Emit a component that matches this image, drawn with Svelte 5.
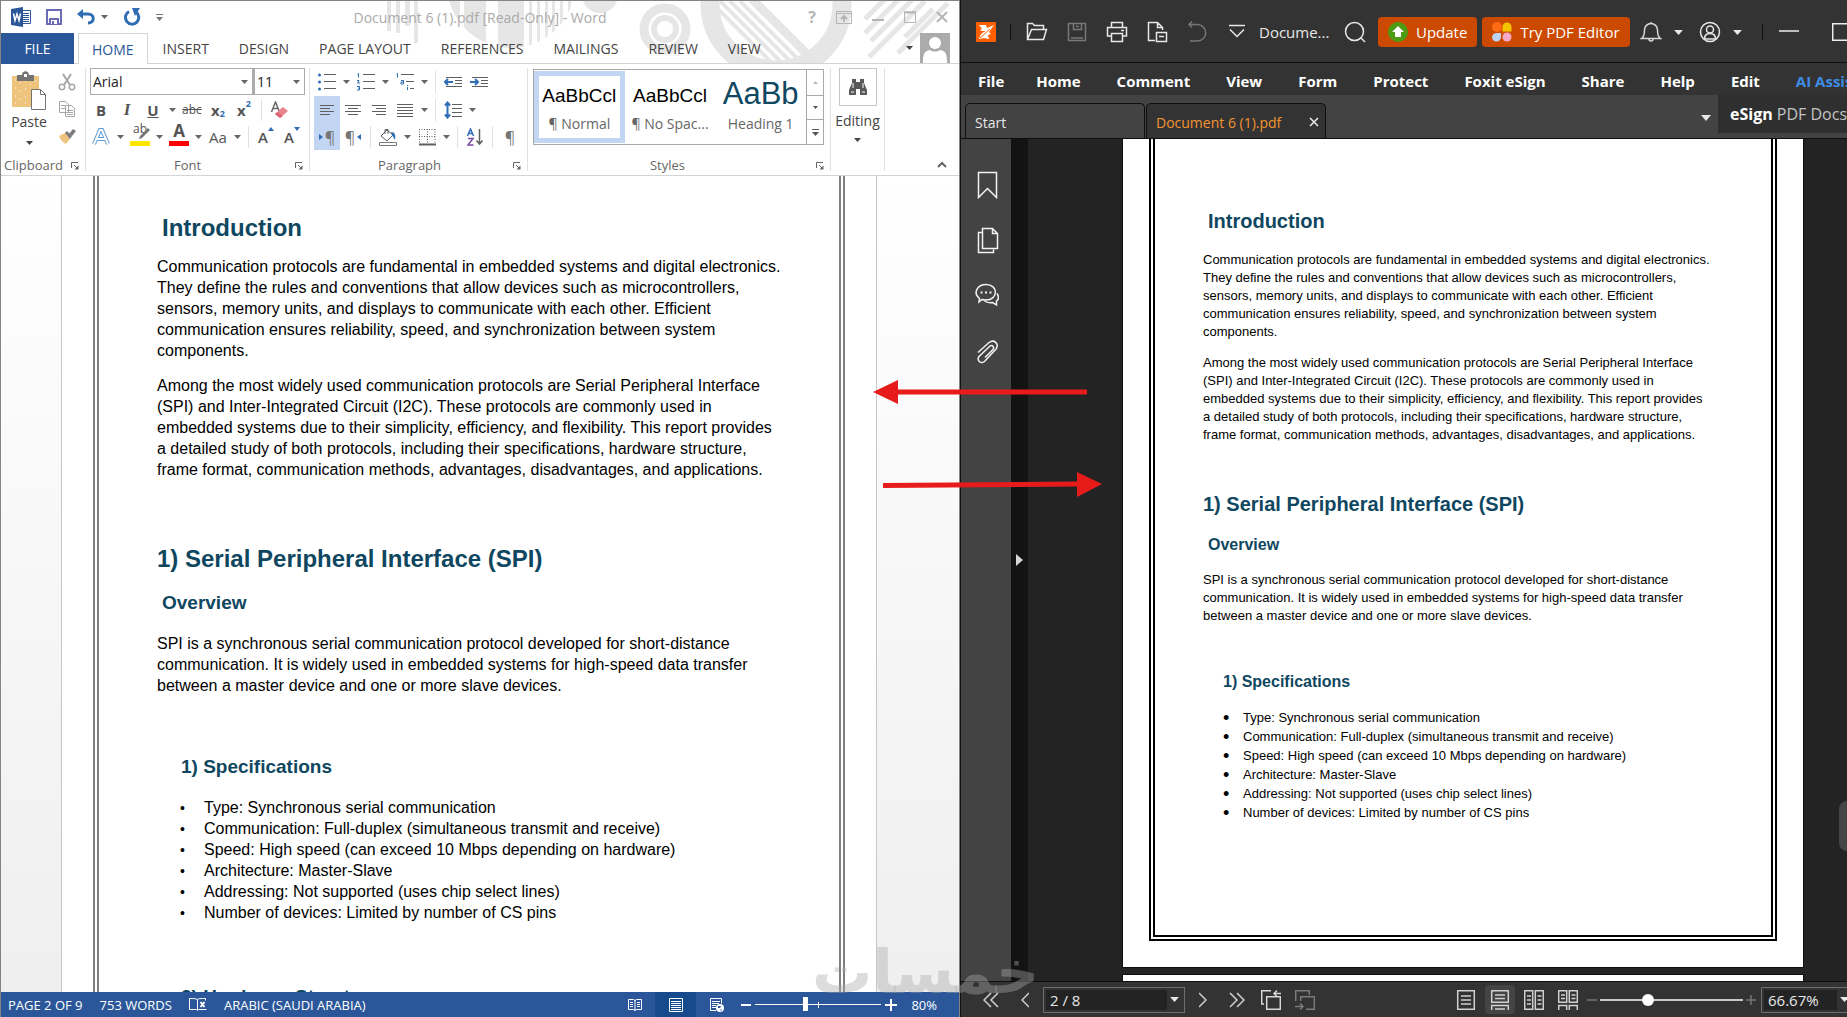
<script>
  let font = $state("Arial");
  let fontSize = $state("11");
  let wordZoom = $state(39);
  let pdfPage = $state("2 / 8");
  let pdfZoom = $state("66.67%");
  let pdfSlider = $state(32);

  const wordTabs = [
    "INSERT",
    "DESIGN",
    "PAGE LAYOUT",
    "REFERENCES",
    "MAILINGS",
    "REVIEW",
    "VIEW",
  ];

  const pdfMenu = [
    "Home",
    "Comment",
    "View",
    "Form",
    "Protect",
    "Foxit eSign",
    "Share",
    "Help",
    "Edit",
  ];

  const intro = [
    "Communication protocols are fundamental in embedded systems and digital electronics.",
    "They define the rules and conventions that allow devices such as microcontrollers,",
    "sensors, memory units, and displays to communicate with each other. Efficient",
    "communication ensures reliability, speed, and synchronization between system",
    "components.",
  ];

  const among = [
    "Among the most widely used communication protocols are Serial Peripheral Interface",
    "(SPI) and Inter-Integrated Circuit (I2C). These protocols are commonly used in",
    "embedded systems due to their simplicity, efficiency, and flexibility. This report provides",
    "a detailed study of both protocols, including their specifications, hardware structure,",
    "frame format, communication methods, advantages, disadvantages, and applications.",
  ];

  const overview = [
    "SPI is a synchronous serial communication protocol developed for short-distance",
    "communication. It is widely used in embedded systems for high-speed data transfer",
    "between a master device and one or more slave devices.",
  ];

  const specs = [
    "Type: Synchronous serial communication",
    "Communication: Full-duplex (simultaneous transmit and receive)",
    "Speed: High speed (can exceed 10 Mbps depending on hardware)",
    "Architecture: Master-Slave",
    "Addressing: Not supported (uses chip select lines)",
    "Number of devices: Limited by number of CS pins",
  ];

  const lines = (ys, x1 = 2, x2 = 16) =>
    ys.map((y) => `<path d="M${x1} ${y}.5H${x2}" stroke="#5f5f5f"/>`).join("");

  // 18x18 ribbon glyphs
  const ribbon = {
    bullets: `<g fill="#2f6db5"><circle cx="1.5" cy="2" r="1.5"/><circle cx="1.5" cy="9" r="1.5"/><circle cx="1.5" cy="16" r="1.5"/></g>${lines([1, 8, 15], 6, 18)}`,
    numbers: `<g fill="none" stroke="#2f6db5"><path d="M.5 1l1-.5v4M0 7.500h2l-1.500 2.500H3M0 13.500h2.500v3.500H0M1 15.200h1.500"/></g>${lines([1, 8, 15], 6, 18)}`,
    multi: `<g fill="none" stroke="#2f6db5"><path d="M.5 1l1-.5v4M5 7.500h2.500v3.500H5v-2h2.500M11.500 14v3M11.500 12v1"/></g>${lines([1], 5, 18)}${lines([8], 10, 18)}${lines([15], 14, 18)}`,
    outdent: `<path d="M1 9h8M4 6L1 9l3 3" fill="none" stroke="#2f6db5" stroke-width="2"/>${lines([4, 13], 2, 18)}${lines([7, 10], 11, 18)}`,
    indent: `<path d="M0 9h8M5 6l3 3-3 3" fill="none" stroke="#2f6db5" stroke-width="2"/>${lines([4, 13], 2, 18)}${lines([7, 10], 11, 18)}`,
    left: lines([4, 10], 2, 16) + lines([7, 13], 2, 12),
    center: lines([4, 10], 1, 17) + lines([7, 13], 4, 14),
    right: lines([4, 10], 2, 16) + lines([7, 13], 6, 16),
    justify: lines([3, 6, 9, 12, 15], 1, 17),
    spacing: `<path d="M3.500 2v14M1 4.500L3.500 1.500 6 4.500M1 13.500l2.500 3 2.500-3" fill="none" stroke="#2f6db5" stroke-width="2"/>${lines([3, 7, 11, 15], 8, 18)}`,
    bucket: `<path d="M8 2l6 5-6 6-6-5z" fill="#fff" stroke="#5f5f5f"/><path d="M6 6V1.500h3V6" fill="none" stroke="#5f5f5f"/><path d="M12 4c4 0 5 3 4 8-1-2-2-3-3-5z" fill="#2f6db5"/><path d="M.5 14.500h17v3h-17z" fill="#fff" stroke="#7a7a7a"/>`,
    borders: `<path d="M1.500 1v15M9.500 1v15M17 1v15M1 1.500h16M1 8.500h16" stroke="#5f5f5f" stroke-dasharray="1 1.500"/><path d="M1 16.500h17" stroke="#5f5f5f" stroke-width="2"/>`,
    sort: `<path d="M13.500 1v15M10.500 12.500l3 3.500 3-3.500" fill="none" stroke="#5f5f5f" stroke-width="1.500"/><path d="M1.500 8l3-7 3 7M2.700 5.500h3.800" fill="none" stroke="#2f6db5" stroke-width="1.500"/><path d="M2 10.500h5L2 17h5.500" fill="none" stroke="#7d4b9f" stroke-width="1.500"/>`,
    eraser: `<path d="M1.500 11L5.500 1l4 10M3 7.500h5" fill="none" stroke="#6a6a6a" stroke-width="1.500"/><path d="M5 13l8-7 5 4-8 7z" fill="#e8828c"/><path d="M5 13l2.500-2 5 4-2.500 2z" fill="#d96672"/>`,
  };

  const cut = `<path d="M5 1l7 11M13 1L6 12" stroke="#a6a6a6" stroke-width="2" fill="none"/><circle cx="4" cy="14" r="2.700" fill="none" stroke="#a6a6a6" stroke-width="1.500"/><circle cx="14" cy="14" r="2.700" fill="none" stroke="#a6a6a6" stroke-width="1.500"/>`;
  const copy = `<path d="M1.500 1.500h6l3 3v8h-9zM7.500 5.500h6l3 3v8h-9z" fill="#fff" stroke="#a6a6a6"/><path d="M3 5.500h4M3 8.500h4M9 10.500h6M9 12.500h6M9 14.500h6" stroke="#a6a6a6"/>`;
  const brush = `<path d="M1 9l6-3 5 6-4 5c-2-1-5-3-7-8z" fill="#eec37c"/><path d="M7 6l2-2 5 5-2 3z" fill="#7a7a7a"/><path d="M11 7l4-5 3 2-4 5z" fill="#7a7a7a"/>`;

  // 22x22 outline icons of the reader
  const reader = {
    open: `<path d="M1.500 18.500v-16h5l2 2h9v4M1.500 18.500l4-10h15l-3 10z"/>`,
    save: `<path stroke="#777" d="M2.500 2.500h17v17h-17zM7.500 2.500v6h8v-6M10 5.500h3M5 17h12"/>`,
    print: `<path d="M5.500 6V1.500h11V6M5.500 15h-4V6.500h19V15h-4M5.500 12.500h11v8h-11zM15 9.500h3"/>`,
    pages: `<path d="M9 19.500H2.500v-18h9l5 5V9M11.500 1.500v5h5M10.500 11.500h10v9h-10zM13 15.500h5"/>`,
    undo: `<path stroke="#777" d="M3 3.500h8.500a8 8 0 0 1 0 16.500H4M6 .5l-3 3 3 3"/>`,
    more: `<path d="M3 4.500h16M4 8.500l7 7 7-7"/>`,
    search: `<circle cx="10.500" cy="10.500" r="9"/><path d="M17 17l4 4"/>`,
    bell: `<path d="M1.500 17.500c3-2 3-5 3-8.500a6.500 6.500 0 0 1 13 0c0 3.500 0 6.500 3 8.500zM9 18a2 2 0 0 0 4 0M11 1v2"/>`,
    user: `<circle cx="11" cy="11" r="9.500"/><circle cx="11" cy="8.500" r="3.500"/><path d="M5.500 18c0-4 2-5.500 5.500-5.500s5.500 1.500 5.500 5.500z"/>`,
  };

  // 24x28 outline icons of the side panel
  const side = [
    ["Bookmarks", `<path d="M3.500 1.500h18v25l-9-9-9 9z"/>`],
    [
      "Pages",
      `<path d="M7.500 1.500h10l5 5v15h-15zM17.500 1.500v5h5M7.500 5.500h-4v20h15v-3"/>`,
    ],
    [
      "Comments",
      `<path d="M4.500 15.500c-7-5.500-2-14 6.500-14 12.500 0 12.500 15.500 0 15.500-2 0-3 0-4-.5L4 19z"/><path d="M22 10.500c2.500 4 1 6.500-.5 7.500v4l-4-2.500c-4 .5-6 0-8-1.500"/><path d="M5.500 9.500h2M10 9.500h2M14.500 9.500h2" stroke-width="2"/>`,
    ],
    [
      "Attachments",
      `<path d="M3 13.500L14 3.500c5-3.500 10.500 1 7 6.500L9.500 22.500c-4 3-8-1.500-5.500-5L15 7c2.500-1.500 4.500 1 3 3.500L10 18.500"/>`,
    ],
  ];
</script>

{#snippet caret()}
  <svg class="caret" width="7" height="4" viewBox="0 0 7 4" aria-hidden="true">
    <path d="M0 0h7L3.500 4z" fill="currentColor" />
  </svg>
{/snippet}

{#snippet tool(name)}
  <button class="tool" aria-label={name}>
    <svg width="18" height="18" viewBox="0 0 18 18">{@html ribbon[name]}</svg>
  </button>
{/snippet}

{#snippet drop(name)}
  <button class="drop" aria-label={name}>{@render caret()}</button>
{/snippet}

{#snippet launcher(name)}
  <button class="launcher" aria-label={name}>
    <svg width="8" height="8" viewBox="0 0 8 8">
      <path d="M.5 6V.5H7M3 3l4 4" fill="none" stroke="#666" />
      <path d="M7.500 3.500v4h-4z" fill="#666" />
    </svg>
  </button>
{/snippet}

{#snippet text(rows)}
  <p>
    {#each rows as row}
      <span class="line">{row}</span>
    {/each}
  </p>
{/snippet}

{#snippet report()}
  <h2 class="nudge">Introduction</h2>
  {@render text(intro)}
  {@render text(among)}
  <h2 class="chapter">1) Serial Peripheral Interface (SPI)</h2>
  <h3 class="nudge">Overview</h3>
  {@render text(overview)}
  <h3 class="sub">1) Specifications</h3>
  <ul>
    {#each specs as spec}
      <li>{spec}</li>
    {/each}
  </ul>
{/snippet}

<div class="desktop">
  <section class="word" aria-label="Word">
    <header class="word__top">
      <svg class="pattern" width="575" height="62" viewBox="375 0 575 62" aria-hidden="true">
        <defs>
          <clipPath id="disc"><circle cx="511" cy="-17" r="64" /></clipPath>
          <clipPath id="ring"><circle cx="776" cy="3" r="58" /></clipPath>
        </defs>
        <g fill="#e6e6e6">
          <path d="M387 0h4v30h-4zM396 0h4v32h-4zM405 0h5v25h-5zM414 0h4v42h-4z" />
          <path
            clip-path="url(#disc)"
            d="M447 0h13v50h-13zM464 0h22v50h-22zM498 0h26v50h-26zM529 0h3v50h-3zM537 0h3v50h-3zM545 0h3v50h-3zM552 0h3v50h-3zM560 0h3v50h-3zM568 0h3v50h-3z"
          />
          <circle cx="600" cy="-6" r="18" />
        </g>
        <g fill="none" stroke="#e6e6e6">
          <circle cx="665" cy="28" r="21" stroke-width="9" />
          <circle cx="665" cy="28" r="11" stroke-width="6" />
          <circle cx="776" cy="3" r="66" stroke-width="19" />
          <path
            clip-path="url(#ring)"
            stroke-width="4"
            d="M710 0l70 70M720 0l70 70M730 0l70 70M740 0l70 70"
          />
          <path clip-path="url(#ring)" stroke-width="9" d="M752 -2l60 60" />
          <path
            stroke-width="5"
            d="M887 -4l-22 22M900 -3l-35 35M913 -2l-42 42M925 0l-56 56M933 8l-28 28M948 2l-50 50"
          />
        </g>
      </svg>

      <div class="titlebar">
        <div class="quick">
          <svg width="20" height="20" viewBox="0 0 20 20" aria-hidden="true">
            <path d="M10.500 3.500h9v13h-9z" fill="#fff" stroke="#2b579a" />
            <path d="M12 6.500h6M12 8.500h6M12 10.500h6M12 12.500h6M12 14.500h6" stroke="#2b579a" />
            <path d="M0 2l12-2v20L0 18z" fill="#2b579a" />
            <path d="M2.500 6.500l1.500 7 2-6.500 2 6.500 1.500-7" fill="none" stroke="#fff" stroke-width="1.500" />
          </svg>
          <button aria-label="Save">
            <svg width="16" height="16" viewBox="0 0 16 16">
              <path d="M1 1h14v14H1z" fill="#fff" stroke="#6b6bb3" stroke-width="2" />
              <path d="M3 9h10v7H3z" fill="#6b6bb3" />
              <path d="M5 11h6v4H5z" fill="#fff" />
              <path d="M6 12h2v3H6z" fill="#6b6bb3" />
            </svg>
          </button>
          <button class="undo" aria-label="Undo">
            <svg width="18" height="16" viewBox="0 0 18 16">
              <path d="M3 5h8c7 0 7 9 0 9" fill="none" stroke="#2f6db5" stroke-width="3" />
              <path d="M0 5l6-5v10z" fill="#2f6db5" />
            </svg>
            {@render caret()}
          </button>
          <button aria-label="Redo">
            <svg width="18" height="18" viewBox="0 0 18 18">
              <path d="M6 3.500A6.700 6.700 0 1 0 13 4" fill="none" stroke="#2f6db5" stroke-width="3" />
              <path d="M9 0h8l-5 8z" fill="#2f6db5" />
            </svg>
          </button>
          <button class="customise" aria-label="Customize Quick Access Toolbar">
            <svg width="7" height="7" viewBox="0 0 7 7">
              <path d="M0 .5h7" stroke="#777" /><path d="M0 3h7L3.500 7z" fill="#777" />
            </svg>
          </button>
        </div>
        <h1>Document 6 (1).pdf [Read-Only] - Word</h1>
        <div class="window">
          <button class="help" aria-label="Help">?</button>
          <button aria-label="Ribbon Display Options">
            <svg width="16" height="13" viewBox="0 0 16 13">
              <path d="M.5 .5h15v12H.5zM.5 2.500h15" fill="none" stroke="#b5b5b5" />
              <path d="M8 11V5M5 8l3-3 3 3" fill="none" stroke="#b5b5b5" stroke-width="2" />
            </svg>
          </button>
          <button aria-label="Minimize">
            <svg width="12" height="12" viewBox="0 0 12 12"><path d="M0 9h12" stroke="#b5b5b5" stroke-width="2" /></svg>
          </button>
          <button aria-label="Maximize">
            <svg width="12" height="12" viewBox="0 0 12 12">
              <path d="M.5 1h11v10.500H.5z" fill="none" stroke="#b5b5b5" /><path d="M0 1.500h12" stroke="#b5b5b5" stroke-width="2" />
            </svg>
          </button>
          <button aria-label="Close">
            <svg width="12" height="12" viewBox="0 0 12 12"><path d="M1 1l10 10M11 1L1 11" stroke="#b5b5b5" stroke-width="2" /></svg>
          </button>
        </div>
      </div>

      <nav class="tabs" aria-label="Ribbon tabs">
        <button class="file">FILE</button>
        <button class="active">HOME</button>
        {#each wordTabs as tab}
          <button>{tab}</button>
        {/each}
        <div class="account">
          {@render caret()}
          <svg width="30" height="30" viewBox="0 0 30 30" aria-hidden="true">
            <path d="M0 0h30v30H0z" fill="#ababab" />
            <circle cx="15" cy="10" r="6" fill="#fff" />
            <path d="M3 30c0-9 1-12 7-13 3 2 7 2 10 0 6 1 7 4 7 13z" fill="#fff" />
          </svg>
        </div>
      </nav>
    </header>

    <div class="ribbon">
      <div class="group clipboard">
        <div class="group__body">
          <button class="paste">
            <svg width="36" height="40" viewBox="0 0 36 40" aria-hidden="true">
              <path d="M1 5h27v31H1z" fill="#eec37c" />
              <path d="M4 9h1M9 12h1M14 10h1M19 13h1M4 17h1M9 20h1M14 18h1M4 25h1M9 28h1M14 26h1M4 32h1M14 32h1M24 10h1" stroke="#fff" />
              <path d="M6 4h5c0-5 7-5 7 0h5v6H6z" fill="#737373" />
              <path d="M13 3h3v3h-3z" fill="#fff" />
              <path d="M20.500 18.500h9l5 5v15h-14z" fill="#fff" stroke="#737373" />
              <path d="M29.500 18.500v5h5" fill="none" stroke="#737373" />
            </svg>
            <span>Paste</span>
            {@render caret()}
          </button>
          <div class="stack">
            <button class="tool" aria-label="Cut"><svg width="18" height="18" viewBox="0 0 18 18">{@html cut}</svg></button>
            <button class="tool" aria-label="Copy"><svg width="18" height="18" viewBox="0 0 18 18">{@html copy}</svg></button>
            <button class="tool" aria-label="Format Painter"><svg width="18" height="18" viewBox="0 0 18 18">{@html brush}</svg></button>
          </div>
        </div>
        <footer>Clipboard {@render launcher("Clipboard settings")}</footer>
      </div>

      <div class="group font">
        <div class="row combos">
          <label class="combo">
            <select bind:value={font} aria-label="Font"><option>Arial</option></select>
            {@render caret()}
          </label>
          <label class="combo combo--size">
            <select bind:value={fontSize} aria-label="Font size"><option>11</option></select>
            {@render caret()}
          </label>
        </div>
        <div class="row">
          <button class="tool"><b>B</b></button>
          <button class="tool serif"><i>I</i></button>
          <button class="tool"><u>U</u></button>
          {@render drop("Underline style")}
          <button class="tool strike"><s>abc</s></button>
          <button class="tool"><b>x</b><sub>2</sub></button>
          <button class="tool"><b>x</b><sup>2</sup></button>
          <span class="sep"></span>
          {@render tool("eraser")}
        </div>
        <div class="row">
          <button class="tool" aria-label="Text Effects">
            <svg width="18" height="18" viewBox="0 0 18 18">
              <path d="M2 16L8 2h2l6 14M5 11h8" fill="none" stroke="#5b9bd5" stroke-width="4" />
              <path d="M2 16L8 2h2l6 14M5 11h8" fill="none" stroke="#fff" stroke-width="2" />
            </svg>
          </button>
          {@render drop("Text effects style")}
          <button class="tool mark mark--yellow" aria-label="Highlight">
            <span>ab</span>
            <svg width="12" height="12" viewBox="0 0 12 12"><path d="M1 11l1-3 8-8 2 2-8 8z" fill="#777" /></svg>
          </button>
          {@render drop("Highlight colour")}
          <button class="tool mark mark--red"><b>A</b></button>
          {@render drop("Font colour")}
          <button class="tool case">Aa</button>
          {@render drop("Change case")}
          <span class="sep"></span>
          <button class="tool grow" aria-label="Increase font size">
            <b>A</b><svg width="6" height="4" viewBox="0 0 6 4"><path d="M0 4h6L3 0z" fill="#2f6db5" /></svg>
          </button>
          <button class="tool grow" aria-label="Decrease font size">
            <b>A</b><svg width="6" height="4" viewBox="0 0 6 4"><path d="M0 0h6L3 4z" fill="#2f6db5" /></svg>
          </button>
        </div>
        <footer>Font {@render launcher("Font settings")}</footer>
      </div>

      <div class="group paragraph">
        <div class="row">
          {@render tool("bullets")}{@render drop("Bullets library")}
          {@render tool("numbers")}{@render drop("Numbering library")}
          {@render tool("multi")}{@render drop("List library")}
          <span class="sep"></span>
          {@render tool("outdent")}{@render tool("indent")}
        </div>
        <div class="row">
          <div class="on">{@render tool("left")}</div>
          {@render tool("center")}{@render tool("right")}
          {@render tool("justify")}{@render drop("Justify options")}
          <span class="sep"></span>
          {@render tool("spacing")}{@render drop("Line spacing")}
        </div>
        <div class="row">
          <button class="tool on pilcrow">
            <svg width="4" height="6" viewBox="0 0 4 6" aria-hidden="true"><path d="M0 0l4 3-4 3z" fill="#2f6db5" /></svg>¶
          </button>
          <button class="tool pilcrow">
            ¶<svg width="4" height="6" viewBox="0 0 4 6" aria-hidden="true"><path d="M4 0L0 3l4 3z" fill="#2f6db5" /></svg>
          </button>
          <span class="sep"></span>
          {@render tool("bucket")}{@render drop("Shading")}
          {@render tool("borders")}{@render drop("Borders list")}
          <span class="sep"></span>
          {@render tool("sort")}
          <span class="sep"></span>
          <button class="tool pilcrow">¶</button>
        </div>
        <footer>Paragraph {@render launcher("Paragraph settings")}</footer>
      </div>

      <div class="group styles">
        <div class="gallery">
          <button class="style style--on"><span>AaBbCcl</span><small>¶ Normal</small></button>
          <button class="style"><span>AaBbCcl</span><small>¶ No Spac...</small></button>
          <button class="style style--heading"><span>AaBb</span><small>Heading 1</small></button>
          <div class="scroll">
            <button aria-label="Previous styles">
              <svg width="5" height="3" viewBox="0 0 5 3"><path d="M0 3h5L2.500 0z" fill="#bbb" /></svg>
            </button>
            <button aria-label="Next styles">
              <svg width="5" height="3" viewBox="0 0 5 3"><path d="M0 0h5L2.500 3z" fill="#555" /></svg>
            </button>
            <button aria-label="More styles">
              <svg width="7" height="7" viewBox="0 0 7 7"><path d="M0 .5h7" stroke="#555" /><path d="M0 3h7L3.500 7z" fill="#555" /></svg>
            </button>
          </div>
        </div>
        <footer>Styles {@render launcher("Styles settings")}</footer>
      </div>

      <div class="group editing">
        <button class="find">
          <span class="find__icon">
            <svg width="18" height="16" viewBox="0 0 18 16" aria-hidden="true">
              <path d="M3 0h4v3h4V0h4v4l3 7v5h-7v-6H7v6H0v-5l3-7z" fill="#595959" />
              <path d="M4 4v5M14 4v5M2 13h3M13 13h3" stroke="#fff" />
            </svg>
          </span>
          <span>Editing</span>
          {@render caret()}
        </button>
      </div>

      <button class="collapse" aria-label="Collapse the Ribbon">
        <svg width="10" height="7" viewBox="0 0 10 7"><path d="M1 6l4-4 4 4" fill="none" stroke="#666" stroke-width="2" /></svg>
      </button>
    </div>

    <main class="word__canvas">
      <article class="word__page">
        <div class="frame">
          {@render report()}
          <h3 class="sub next">2) Hardware Structure</h3>
        </div>
      </article>
    </main>

    <footer class="word__status">
      <span>PAGE 2 OF 9</span>
      <span>753 WORDS</span>
      <button aria-label="Proofing">
        <svg width="18" height="15" viewBox="0 0 18 15">
          <path d="M8.500 13.500V2.500c-2-1-4-1-8-1v11h7l1 1 1-1h8M8.500 2.500c1-1 3-1 8-1v2" fill="none" stroke="#fff" />
          <path d="M11.500 5l4 5M15.500 5l-4 5" stroke="#fff" stroke-width="2" />
        </svg>
      </button>
      <span>ARABIC (SAUDI ARABIA)</span>
      <div class="views">
        <button aria-label="Read Mode">
          <svg width="14" height="14" viewBox="0 0 14 14">
            <path d="M.5 1.500h5l1.500 1 1.500-1h5v10h-5l-1.500 1-1.500-1h-5zM7 2v11" fill="none" stroke="#fff" />
            <path d="M2 4.500h3M2 6.500h3M2 8.500h3M9 4.500h3M9 6.500h3M9 8.500h3" stroke="#fff" />
          </svg>
        </button>
        <button class="current" aria-label="Print Layout">
          <svg width="14" height="14" viewBox="0 0 14 14">
            <path d="M.5 .5h13v13H.5zM2 3.500h10M2 5.500h10M2 7.500h10M2 9.500h10M2 11.500h10" fill="none" stroke="#fff" />
          </svg>
        </button>
        <button aria-label="Web Layout">
          <svg width="14" height="14" viewBox="0 0 14 14">
            <path d="M6 12.500H.5V.5h11v5M2 3.500h8M2 5.500h7M2 7.500h4M2 9.500h4" fill="none" stroke="#fff" />
            <circle cx="10" cy="10" r="4" fill="#fff" />
            <path d="M8 8h3l-1 2H8zM11 11l1 1-2 1z" fill="#2b579a" />
          </svg>
        </button>
      </div>
      <button aria-label="Zoom out">
        <svg width="10" height="10" viewBox="0 0 10 10"><path d="M0 5h10" stroke="#fff" stroke-width="2" /></svg>
      </button>
      <input type="range" class="word-range" bind:value={wordZoom} aria-label="Word zoom" />
      <button aria-label="Zoom in">
        <svg width="12" height="12" viewBox="0 0 12 12"><path d="M0 6h12M6 0v12" stroke="#fff" stroke-width="2" /></svg>
      </button>
      <span class="percent">80%</span>
    </footer>
  </section>

  <section class="pdf" aria-label="Foxit PDF Reader">
    <header class="pdf__title">
      <svg class="logo" width="20" height="20" viewBox="0 0 20 20" aria-hidden="true">
        <rect width="20" height="20" rx="1" fill="#ff5f00" />
        <path d="M3 3h7l1 3 7-3-5 7 2 2-3 1 1 4c-4-1-6-1-10 0 1-5 4-7 7-8-3 0-5 0-6-1l2-1z" fill="#fff" />
        <path d="M4 16l10-9" stroke="#ff5f00" />
      </svg>
      <span class="bar"></span>
      {#each ["open", "save", "print", "pages", "undo", "more"] as name}
        <button class="icon" aria-label={name}>
          <svg width="22" height="22" viewBox="0 0 22 22" fill="none" stroke="#e8e8e8" stroke-width="1.5">{@html reader[name]}</svg>
        </button>
      {/each}
      <span class="name">Docume...</span>
      <button class="icon" aria-label="Search">
        <svg width="22" height="22" viewBox="0 0 22 22" fill="none" stroke="#e8e8e8" stroke-width="1.5">{@html reader.search}</svg>
      </button>
      <button class="promo">
        <svg width="20" height="20" viewBox="0 0 20 20" aria-hidden="true">
          <circle cx="10" cy="10" r="10" fill="#4d9b13" />
          <path d="M10 4l6 6h-3v5H7v-5H4z" fill="#fff" />
        </svg>
        Update
      </button>
      <button class="promo">
        <svg width="20" height="20" viewBox="0 0 20 20" aria-hidden="true">
          <circle cx="5" cy="5" r="5" fill="#ff6a13" />
          <path d="M10.500 9.500V5a4.500 4.500 0 0 1 9 0v4.500z" fill="#f5c400" />
          <path d="M0 15a5 5 0 0 1 5-4h4v4a4.500 4.500 0 0 1-9 0z" fill="#bcd3f2" />
          <circle cx="15" cy="15" r="4.500" fill="#f4a9c8" />
        </svg>
        Try PDF Editor
      </button>
      <button class="icon menu" aria-label="Notifications">
        <svg width="22" height="22" viewBox="0 0 22 22" fill="none" stroke="#d8d8d8" stroke-width="1.5">{@html reader.bell}</svg>
        {@render caret()}
      </button>
      <button class="icon menu" aria-label="Account">
        <svg width="22" height="22" viewBox="0 0 22 22" fill="none" stroke="#e8e8e8" stroke-width="1.5">{@html reader.user}</svg>
        {@render caret()}
      </button>
      <span class="bar bar--end"></span>
      <button class="win" aria-label="Minimize window">
        <svg width="20" height="18" viewBox="0 0 20 18"><path d="M0 8h20" stroke="#eee" stroke-width="1.5" /></svg>
      </button>
      <button class="win" aria-label="Maximize window">
        <svg width="20" height="18" viewBox="0 0 20 18"><path d="M.7 .7h18.600v16.600H.7z" fill="none" stroke="#eee" stroke-width="1.500" /></svg>
      </button>
    </header>

    <nav class="pdf__menu" aria-label="Reader menu">
      <button class="first">File</button>
      {#each pdfMenu as item}
        <button>{item}</button>
      {/each}
      <button class="ai">AI Assistant</button>
    </nav>

    <div class="pdf__tabs">
      <button class="tab">Start</button>
      <div class="tab tab--on">
        <span>Document 6 (1).pdf</span>
        <button aria-label="Close tab">
          <svg width="10" height="10" viewBox="0 0 10 10"><path d="M1 1l8 8M9 1L1 9" stroke="#eee" stroke-width="1.5" /></svg>
        </button>
      </div>
      <button class="list" aria-label="Tab list">
        <svg width="10" height="6" viewBox="0 0 10 6"><path d="M0 0h10L5 6z" fill="#e6e6e6" /></svg>
      </button>
      <a class="esign" href="#esign"><b>eSign</b> PDF Docs</a>
    </div>

    <div class="pdf__body">
      <aside>
        {#each side as [name, shape]}
          <button aria-label={name}>
            <svg width="24" height="28" viewBox="0 0 24 28" fill="none" stroke="#f2f2f2" stroke-width="1.5">{@html shape}</svg>
          </button>
        {/each}
      </aside>
      <button class="handle" aria-label="Expand panel">
        <svg width="7" height="12" viewBox="0 0 7 12"><path d="M0 0l7 6-7 6z" fill="#d5d5d5" /></svg>
      </button>
      <main class="pdf__canvas">
        <article class="pdf__page">
          <div class="frame">{@render report()}</div>
        </article>
        <article class="pdf__page pdf__page--next"></article>
        <div class="assist"></div>
      </main>
    </div>

    <footer class="pdf__status">
      <button aria-label="First page">
        <svg width="16" height="16" viewBox="0 0 16 16" fill="none" stroke="#d0d0d0" stroke-width="1.5"><path d="M8 1L1 8l7 7M15 1L8 8l7 7" /></svg>
      </button>
      <button aria-label="Previous page">
        <svg width="8" height="16" viewBox="0 0 8 16" fill="none" stroke="#d0d0d0" stroke-width="1.5"><path d="M8 1L1 8l7 7" /></svg>
      </button>
      <label class="field">
        <select bind:value={pdfPage} aria-label="Page"><option>2 / 8</option></select>
        <span class="field__caret">{@render caret()}</span>
      </label>
      <button aria-label="Next page">
        <svg width="8" height="16" viewBox="0 0 8 16" fill="none" stroke="#d0d0d0" stroke-width="1.5"><path d="M0 1l7 7-7 7" /></svg>
      </button>
      <button aria-label="Last page">
        <svg width="16" height="16" viewBox="0 0 16 16" fill="none" stroke="#d0d0d0" stroke-width="1.5"><path d="M1 1l7 7-7 7M8 1l7 7-7 7" /></svg>
      </button>
      <button class="nav" aria-label="Previous view">
        <svg width="20" height="20" viewBox="0 0 20 20" fill="none" stroke="#d8d8d8" stroke-width="1.5"><path d="M3 14H.7V.7H10M5.700 6.700h13.600v12.600H5.700zM20 3.500h-7M16 .5l-3 3 3 3" /></svg>
      </button>
      <button class="nav" aria-label="Next view">
        <svg width="20" height="20" viewBox="0 0 20 20" fill="none" stroke="#7a7a7a" stroke-width="1.5"><path d="M.7 11V.7h13.600V5M5.700 11V6.700h13.600v12.600H11M0 16.500h8M5 13.500l3 3-3 3" /></svg>
      </button>
      <div class="layouts">
        <button aria-label="Single page">
          <svg width="20" height="20" viewBox="0 0 20 20" fill="none" stroke="#d0d0d0" stroke-width="1.5"><path d="M1.700 .7h16.600v18.600H1.700zM5 6h10M5 10h10M5 14h10" /></svg>
        </button>
        <button class="current" aria-label="Continuous">
          <svg width="20" height="20" viewBox="0 0 20 20" fill="none" stroke="#d0d0d0" stroke-width="1.5"><path d="M1.700 .7h16.600v11.600H1.700zM5 5h10M5 8.500h10M1.700 20v-4.500h16.600V20M5 19h10" /></svg>
        </button>
        <button aria-label="Facing">
          <svg width="20" height="20" viewBox="0 0 20 20" fill="none" stroke="#d0d0d0" stroke-width="1.5"><path d="M.7 .7h8v18.600h-8zM11.300 .7h8v18.600h-8zM3 6h4M3 10h4M3 14h4M13.500 6h4M13.500 10h4M13.500 14h4" /></svg>
        </button>
        <button aria-label="Continuous facing">
          <svg width="20" height="20" viewBox="0 0 20 20" fill="none" stroke="#d0d0d0" stroke-width="1.5"><path d="M.7 .7h8v11.600h-8zM11.300 .7h8v11.600h-8zM3 5h4M3 8.500h4M13.500 5h4M13.500 8.500h4M.7 20v-4.500h8V20M11.300 20v-4.500h8V20" /></svg>
        </button>
      </div>
      <button aria-label="Reduce">
        <svg width="10" height="10" viewBox="0 0 10 10"><path d="M0 5h10" stroke="#777" stroke-width="1.5" /></svg>
      </button>
      <input type="range" class="pdf-range" bind:value={pdfSlider} aria-label="Reader zoom" />
      <button aria-label="Enlarge">
        <svg width="10" height="10" viewBox="0 0 10 10"><path d="M0 5h10M5 0v10" stroke="#777" stroke-width="1.5" /></svg>
      </button>
      <label class="field field--zoom">
        <select bind:value={pdfZoom} aria-label="Magnification"><option>66.67%</option></select>
        <span class="field__caret">{@render caret()}</span>
      </label>
    </footer>
  </section>

  <svg class="arrows" width="230" height="118" viewBox="0 0 230 118" aria-hidden="true">
    <path d="M22 12h192M10 105.500l196-1.500" stroke="#e81b1b" stroke-width="5" />
    <path d="M0 12L25 0v24zM204 92l25 12-25 13z" fill="#e81b1b" />
  </svg>
  <span class="watermark" lang="ar" dir="rtl">خمسات</span>
</div>

<style>
  :global(body) {
    background: #fff;
  }

  .desktop {
    display: grid;
    grid-template-columns: 960fr 887fr;
    height: 100vh;
    position: relative;
    overflow: hidden;
    font-family: "Open Sans", "Noto Sans", sans-serif;
    font-size: 14px;
  }

  button,
  select {
    font: inherit;
    color: inherit;
    background: none;
    border: 0;
    padding: 0;
    margin: 0;
    white-space: nowrap;
  }

  select {
    appearance: none;
  }

  svg {
    display: block;
    flex: none;
  }

  h1,
  h2,
  h3,
  p,
  ul {
    margin: 0;
    padding: 0;
    white-space: nowrap;
  }

  /* Word */
  .word {
    display: flex;
    flex-direction: column;
    min-width: 0;
    min-height: 0;
    box-sizing: border-box;
    border: 1px solid #848484;
    border-bottom: 0;
    background: #fff;
    color: #444;
  }

  .word__top {
    position: relative;
  }

  .pattern {
    position: absolute;
    top: 0;
    right: 9px;
  }

  .titlebar {
    position: relative;
    display: grid;
    grid-template-columns: 1fr auto 1fr;
    align-items: center;
    height: 32px;
  }

  h1 {
    font-size: 14px;
    font-weight: 400;
    color: #aaa;
  }

  .quick {
    display: flex;
    align-items: center;
    gap: 15px;
    padding-left: 10px;
  }

  .undo {
    display: flex;
    align-items: center;
    gap: 6px;
    color: #666;
  }

  .window {
    display: flex;
    justify-content: flex-end;
    align-items: center;
    gap: 20px;
    padding-right: 11px;
  }

  .help {
    font-weight: 700;
    font-size: 16px;
    color: #b5b5b5;
  }

  .tabs {
    position: relative;
    display: flex;
    height: 31px;
    box-sizing: border-box;
    border-bottom: 1px solid #d4d4d4;
  }

  .tabs button {
    padding: 0 15px;
  }

  .tabs .file {
    width: 73px;
    margin-right: 4px;
    background: #2b579a;
    color: #fff;
    height: 31px;
  }

  .tabs .active {
    height: 31px;
    padding: 0 13px;
    color: #2b579a;
    background: #fff;
    border: 1px solid #d4d4d4;
    border-bottom: 0;
  }

  .account {
    display: flex;
    align-items: center;
    gap: 7px;
    margin-left: auto;
    padding-right: 9px;
  }

  .ribbon {
    display: flex;
    padding-top: 4px;
    border-bottom: 1px solid #d4d4d4;
    color: #666;
  }

  .group {
    display: flex;
    flex-direction: column;
    border-right: 1px solid #e1e1e1;
    box-sizing: border-box;
    height: 103px;
    margin-bottom: 4px;
  }

  .group footer {
    display: flex;
    align-items: center;
    justify-content: center;
    position: relative;
    margin-top: auto;
    padding-right: 22px;
    font-size: 13px;
    line-height: 12px;
  }

  .launcher {
    position: absolute;
    right: 6px;
    top: 3px;
  }

  .group__body {
    display: flex;
  }

  .clipboard {
    width: 85px;
  }

  .clipboard footer {
    justify-content: flex-start;
    padding: 0 0 0 3px;
  }

  .paste {
    display: flex;
    flex-direction: column;
    align-items: center;
    width: 56px;
    padding-top: 3px;
    color: #444;
  }

  .paste span {
    line-height: 22px;
  }

  .paste .caret {
    margin-top: 8px;
  }

  .stack {
    display: grid;
  }

  .stack .tool {
    width: 20px;
  }

  .font {
    width: 224px;
    padding-left: 2px;
  }

  .paragraph {
    width: 218px;
    padding-left: 4px;
  }

  .row {
    display: flex;
    align-items: center;
    height: 27px;
  }

  .combos + .row {
    margin-top: 1px;
  }

  .tool {
    display: flex;
    align-items: center;
    justify-content: center;
    position: relative;
    width: 26px;
    height: 27px;
    font-size: 15px;
    color: #555;
  }

  .tool sub,
  .tool sup {
    font-size: 9px;
    line-height: 9px;
    font-weight: 700;
    color: #2f6db5;
  }

  .tool sub {
    align-self: flex-end;
    padding-bottom: 5px;
  }

  .tool sup {
    align-self: flex-start;
    padding-top: 3px;
  }

  .tool u {
    font-weight: 700;
  }

  .serif {
    font-family: "Liberation Serif", serif;
    font-weight: 700;
    font-size: 17px;
  }

  .strike {
    font-size: 12px;
  }

  .on {
    background: #c2d5f2;
  }

  .drop {
    width: 13px;
    height: 27px;
    display: flex;
    align-items: center;
    justify-content: center;
  }

  .sep {
    width: 1px;
    height: 22px;
    margin: 0 4px;
    background: #e1e1e1;
  }

  .mark {
    align-items: flex-start;
    line-height: 16px;
  }

  .mark::after {
    content: "";
    position: absolute;
    left: 3px;
    right: 3px;
    bottom: 4px;
    height: 5px;
  }

  .mark--yellow {
    font-size: 12px;
    line-height: 12px;
  }

  .mark--yellow svg {
    position: absolute;
    right: 3px;
    top: 5px;
  }

  .mark--yellow::after {
    background: #ffe600;
  }

  .mark--red::after {
    background: #f00;
  }

  .mark--red b {
    font-size: 17px;
  }

  .grow b {
    font-weight: 600;
  }

  .grow svg {
    align-self: flex-start;
    margin-top: 4px;
  }

  .pilcrow {
    gap: 2px;
    font-size: 16px;
    color: #777;
  }

  .combos {
    padding: 0 4px 0 2px;
  }

  .combo {
    position: relative;
    flex: 1;
    display: flex;
    align-items: center;
    box-sizing: border-box;
    height: 27px;
    border: 1px solid #ababab;
    color: #222;
  }

  .combo select {
    width: 100%;
    height: 100%;
    padding-left: 2px;
  }

  .combo .caret {
    position: absolute;
    right: 4px;
    color: #666;
  }

  .combo--size {
    flex: 0 0 52px;
    border-left-width: 2px;
  }

  .paragraph .row:first-child {
    margin-bottom: 1px;
  }

  .styles {
    flex: 0 0 303px;
    padding: 1px 6px 0 5px;
  }

  .styles .launcher {
    right: 0;
  }

  .gallery {
    display: flex;
    height: 76px;
    box-sizing: border-box;
    border: 1px solid #a8a8a8;
  }

  .style {
    flex: 1;
    min-width: 0;
    display: flex;
    flex-direction: column;
    align-items: center;
    box-sizing: border-box;
    border: 5px solid transparent;
    margin: 1px 0;
    overflow: hidden;
  }

  .style--on {
    border-color: #c2d5f2;
  }

  .style span {
    font-family: "Liberation Sans", Arial, sans-serif;
    font-size: 19px;
    line-height: 40px;
    width: 76px;
    height: 38px;
    overflow: hidden;
    color: #000;
  }

  .style--heading span {
    font-size: 31px;
    line-height: 36px;
    color: #0f4761;
  }

  .style small {
    font-size: 14px;
    line-height: 28px;
  }

  .scroll {
    width: 16px;
    display: grid;
    grid-template-rows: 1fr 1fr 1fr;
    border-left: 1px solid #a8a8a8;
  }

  .scroll button {
    display: grid;
    place-items: center;
  }

  .scroll button + button {
    border-top: 1px solid #a8a8a8;
  }

  .editing {
    width: 54px;
    align-items: center;
  }

  .find {
    display: flex;
    flex-direction: column;
    align-items: center;
    line-height: 30px;
    color: #444;
  }

  .find .caret {
    margin-top: 2px;
  }

  .find__icon {
    display: grid;
    place-items: center;
    width: 36px;
    height: 36px;
    border: 1px solid #c6c6c6;
  }

  .collapse {
    align-self: flex-end;
    margin: 0 12px 7px auto;
  }

  .word__canvas {
    flex: 1;
    min-height: 0;
    overflow: hidden;
    display: flex;
    background: linear-gradient(#fff, #efefef);
  }

  .word__page {
    flex: 1;
    margin: 0 82px 0 60px;
    padding: 0 31px;
    background: #fff;
    border: solid #c6c6c6;
    border-width: 0 1px;
  }

  .frame {
    font-family: "Liberation Sans", Arial, sans-serif;
    color: #000;
    box-sizing: border-box;
  }

  .word__page .frame {
    min-height: 100%;
    border: double #808080;
    border-width: 0 6px;
    padding: 38px 0 0 58px;
    font-size: 16px;
    line-height: 21px;
  }

  .line {
    display: block;
  }

  h2,
  h3 {
    color: #0f4761;
  }

  .nudge {
    padding-left: 5px;
  }

  ul {
    list-style: none;
  }

  li::before {
    content: "•";
    display: inline-block;
    line-height: 1px;
  }

  .word__page h2 {
    font-size: 24px;
    line-height: 28px;
  }

  .word__page h3 {
    font-size: 19px;
    line-height: 22px;
  }

  .word__page p {
    margin-top: 14px;
  }

  .word__page .chapter {
    margin-top: 65px;
  }

  .word__page .chapter + h3 {
    margin-top: 19px;
  }

  .word__page h3 + p {
    margin-top: 19px;
  }

  .word__page .sub {
    margin-top: 60px;
    padding-left: 24px;
  }

  .word__page ul {
    margin-top: 19px;
    padding-left: 23px;
  }

  .word__page li::before {
    width: 24px;
    font-size: 14px;
  }

  .word__page .next {
    margin-top: 63px;
  }

  .word__status {
    display: flex;
    align-items: center;
    height: 25px;
    padding-left: 7px;
    background: #2b579a;
    color: #fff;
    font-size: 13px;
    white-space: nowrap;
  }

  .word__status > span {
    margin-right: 17px;
  }

  .word__status > span + button {
    margin-right: 17px;
  }

  .word__status .views {
    display: flex;
    height: 100%;
    margin-left: auto;
    margin-right: 4px;
  }

  .views button {
    display: grid;
    place-items: center;
    width: 41px;
  }

  .views .current {
    background: #174a8c;
  }

  input[type="range"] {
    appearance: none;
    background: transparent;
    margin: 0;
  }

  input.word-range[type="range"] {
    width: 126px;
    height: 16px;
    margin: 0 4px;
    background: linear-gradient(#fff, #fff) center / 1px 6px no-repeat;
  }

  .word-range::-webkit-slider-runnable-track {
    height: 1px;
    background: #fff;
  }

  .word-range::-webkit-slider-thumb {
    appearance: none;
    width: 5px;
    height: 14px;
    margin-top: -7px;
    background: #fff;
  }

  .word__status .percent {
    margin: 0 22px 0 14px;
  }

  /* PDF reader */
  .pdf {
    display: flex;
    flex-direction: column;
    min-width: 0;
    min-height: 0;
    overflow: hidden;
    border-left: 1px solid #111;
    background: #333;
    color: #e8e8e8;
    font-size: 15px;
  }

  .pdf__title {
    display: flex;
    align-items: center;
    height: 63px;
    padding: 0 0 10px 15px;
    box-sizing: border-box;
    border-bottom: 1px solid #0e0e0e;
    white-space: nowrap;
  }

  .pdf__title > * {
    flex: none;
    margin-top: 12px;
  }

  .logo {
    margin-right: 14px;
  }

  .bar {
    width: 1px;
    height: 16px;
    margin-right: 6px;
    background: #0e0e0e;
  }

  .icon {
    display: flex;
    align-items: center;
    justify-content: center;
    width: 40px;
  }

  .name {
    width: 76px;
    padding-left: 2px;
  }

  .promo {
    display: flex;
    align-items: center;
    gap: 8px;
    box-sizing: border-box;
    height: 30px;
    margin-left: 3px;
    margin-right: 2px;
    padding: 0 10px;
    border-radius: 4px;
    background: #cc4a00;
    color: #fff;
  }

  .menu {
    width: 59px;
    gap: 12px;
  }

  .pdf .caret {
    width: 9px;
    height: 5px;
  }

  .bar--end {
    margin: 12px 16px 0 12px;
  }

  .win {
    margin-right: 33px;
  }

  .pdf__menu {
    display: flex;
    gap: 36px;
    height: 32px;
    padding: 3px 0 0 17px;
    box-sizing: border-box;
    color: #fff;
    font-weight: 700;
  }

  .pdf__menu .first {
    margin-right: -4px;
  }

  .pdf__menu .ai {
    color: #3f8ce6;
  }

  .pdf__tabs {
    display: flex;
    align-items: flex-end;
    height: 44px;
    box-sizing: border-box;
    padding-left: 4px;
    gap: 1px;
    background: #434343;
    border-bottom: 1px solid #0e0e0e;
  }

  .tab {
    display: flex;
    align-items: center;
    justify-content: space-between;
    width: 180px;
    height: 35px;
    box-sizing: border-box;
    padding: 2px 6px 0 9px;
    border: 1px solid #0e0e0e;
    border-bottom: 0;
    border-radius: 5px 5px 0 0;
    font-size: 14px;
  }

  .tab--on {
    background: #333;
    color: #f59331;
  }

  .list {
    margin: 0 6px 17px auto;
  }

  .esign {
    align-self: flex-start;
    width: 129px;
    height: 38px;
    line-height: 38px;
    box-sizing: border-box;
    padding-left: 12px;
    overflow: hidden;
    white-space: nowrap;
    background: #2f2f2f;
    color: #c4c4c4;
    font-size: 16px;
    text-decoration: none;
  }

  .esign b {
    color: #fff;
  }

  .pdf__body {
    flex: 1;
    min-height: 0;
    display: flex;
  }

  aside {
    flex: none;
    width: 50px;
    padding: 18px 0 0 1px;
    box-sizing: border-box;
    background: #434343;
  }

  aside button {
    display: grid;
    place-items: center;
    width: 100%;
    height: 56px;
  }

  .handle {
    flex: none;
    display: grid;
    place-items: center;
    width: 17px;
    background: #131313;
  }

  .pdf__canvas {
    flex: 1;
    min-width: 0;
    display: flex;
    flex-direction: column;
    gap: 8px;
    overflow: hidden;
    position: relative;
    background: #232323;
  }

  .pdf__page {
    flex: none;
    margin: 0 44px 0 95px;
    padding: 0 26px 26px;
    background: #fff;
    outline: 1px solid #0e0e0e;
  }

  .pdf__page--next {
    flex: 1;
    padding: 0;
  }

  .pdf__page .frame {
    border: double #000;
    border-width: 0 6px 6px;
    padding: 70px 0 113px 48px;
    font-size: 13px;
    line-height: 18px;
  }

  .pdf__page h2 {
    font-size: 20px;
    line-height: 24px;
  }

  .pdf__page h3 {
    font-size: 16px;
    line-height: 20px;
  }

  .pdf__page p {
    margin-top: 18px;
  }

  .pdf__page p + p {
    margin-top: 13px;
  }

  .pdf__page .chapter {
    margin-top: 48px;
  }

  .pdf__page .chapter + h3 {
    margin-top: 19px;
  }

  .pdf__page h3 + p {
    margin-top: 16px;
  }

  .pdf__page .sub {
    margin-top: 47px;
    padding-left: 20px;
  }

  .pdf__page ul {
    margin-top: 16px;
    padding-left: 20px;
    line-height: 19px;
  }

  .pdf__page li::before {
    width: 20px;
    font-size: 18px;
    vertical-align: -2px;
  }

  .assist {
    position: absolute;
    right: -8px;
    top: 662px;
    width: 16px;
    height: 50px;
    border-radius: 8px;
    background: #454545;
  }

  .pdf__status {
    display: flex;
    align-items: center;
    height: 35px;
    padding-left: 22px;
    border-top: 1px solid #0e0e0e;
  }

  .pdf__status > button {
    margin-right: 22px;
  }

  .field {
    display: flex;
    box-sizing: border-box;
    width: 142px;
    height: 26px;
    margin: 0 14px 0 -8px;
    padding: 2px;
    border: 1px solid #6d6d6d;
    flex: none;
  }

  .field select {
    flex: 1;
    padding-left: 4px;
    background: #232323;
  }

  .field__caret {
    display: grid;
    place-items: center;
    width: 15px;
  }

  .pdf__status > .nav {
    margin: 0 20px 0 -6px;
  }

  .layouts {
    display: flex;
    gap: 4px;
    margin-left: auto;
    margin-right: 4px;
  }

  .layouts button {
    display: grid;
    place-items: center;
    width: 30px;
    height: 29px;
    border-radius: 4px;
  }

  .layouts .current {
    background: #444;
  }

  .pdf-range {
    width: 143px;
    height: 16px;
  }

  .pdf__status > .layouts ~ button {
    margin-right: 3px;
  }

  .pdf-range::-webkit-slider-runnable-track {
    height: 2px;
    background: #c8c8c8;
  }

  .pdf-range::-webkit-slider-thumb {
    appearance: none;
    width: 12px;
    height: 12px;
    margin-top: -5px;
    border-radius: 50%;
    background: #fff;
  }

  .pdf-range + button {
    padding-left: 3px;
  }

  .field--zoom {
    width: 94px;
    margin: 0 -8px 0 2px;
  }

  /* Overlays */
  .arrows {
    position: absolute;
    left: 873px;
    top: 380px;
  }

  .watermark {
    position: absolute;
    left: 812px;
    bottom: 11px;
    font-family: "DejaVu Sans", sans-serif;
    font-weight: 700;
    font-size: 60px;
    line-height: 68px;
    color: rgba(170, 170, 170, 0.4);
    pointer-events: none;
  }
</style>
